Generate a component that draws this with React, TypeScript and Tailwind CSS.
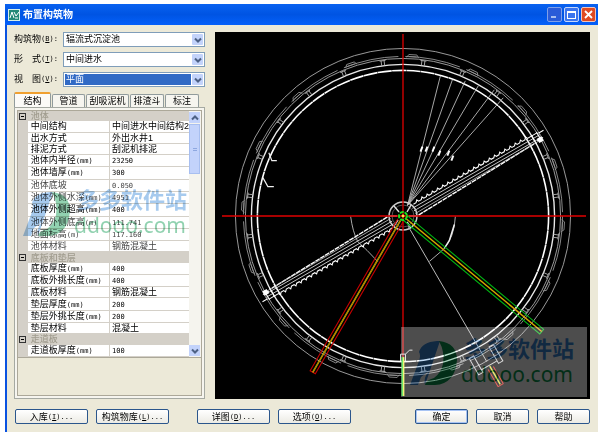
import React from "react";

type Row =
  | { kind: "group"; name: string }
  | { kind: "item"; name: string; unit?: string; value: string; locked?: boolean };

const rows: Row[] = [
  { kind: "group", name: "池体" },
  { kind: "item", name: "中间结构", value: "中间进水中间结构2" },
  { kind: "item", name: "出水方式", value: "外出水井1" },
  { kind: "item", name: "排泥方式", value: "刮泥机排泥" },
  { kind: "item", name: "池体内半径", unit: "(mm)", value: "23250" },
  { kind: "item", name: "池体墙厚", unit: "(mm)", value: "300" },
  { kind: "item", name: "池体底坡", value: "0.050", locked: true },
  { kind: "item", name: "池体外侧水深", unit: "(mm)", value: "4951", locked: true },
  { kind: "item", name: "池体外侧超高", unit: "(mm)", value: "400" },
  { kind: "item", name: "池体外侧底高", unit: "(m)", value: "111.741", locked: true },
  { kind: "item", name: "地面标高", unit: "(m)", value: "117.160", locked: true },
  { kind: "item", name: "池体材料", value: "钢筋混凝土", locked: true },
  { kind: "group", name: "底板和垫层" },
  { kind: "item", name: "底板厚度", unit: "(mm)", value: "400" },
  { kind: "item", name: "底板外挑长度", unit: "(mm)", value: "400" },
  { kind: "item", name: "底板材料", value: "钢筋混凝土" },
  { kind: "item", name: "垫层厚度", unit: "(mm)", value: "200" },
  { kind: "item", name: "垫层外挑长度", unit: "(mm)", value: "200" },
  { kind: "item", name: "垫层材料", value: "混凝土" },
  { kind: "group", name: "走道板" },
  { kind: "item", name: "走道板厚度", unit: "(mm)", value: "100" },
];

const mono = "font-['DejaVu_Sans_Mono',monospace] text-[7px]";

function Chevron({ up = false }: { up?: boolean }) {
  return (
    <svg viewBox="0 0 8 6" className="h-[6px] w-[8px]" fill="none" stroke="#4d6185" strokeWidth="2">
      <path d={up ? "M1 4.5 4 1.5 7 4.5" : "M1 1.5 4 4.5 7 1.5"} />
    </svg>
  );
}

function Field({
  id,
  label,
  hotkey,
  value,
  focused = false,
}: {
  id: string;
  label: string[];
  hotkey: string;
  value: string;
  focused?: boolean;
}) {
  return (
    <div className="flex h-[15px] items-center">
      <label htmlFor={id} className="flex w-[49px] shrink-0 items-center">
        <span className="flex w-[27px] justify-between">
          {label.map((part) => (
            <span key={part}>{part}</span>
          ))}
        </span>
        <span className={mono}>
          (<u>{hotkey}</u>):
        </span>
      </label>
      <div className="relative h-[15px] flex-1 border border-[#7f9db9] bg-white p-px">
        <select
          id={id}
          defaultValue={value}
          className={`block h-[11px] w-[126px] appearance-none pl-px text-[9px] leading-[11px] outline-none ${
            focused ? "bg-[#316ac5] text-white" : "bg-white text-black"
          }`}
        >
          <option>{value}</option>
        </select>
        <span className="pointer-events-none absolute top-px right-px flex h-[11px] w-[11px] items-center justify-center rounded-[1px] bg-[#c3d3fb]">
          <Chevron />
        </span>
      </div>
    </div>
  );
}

function Watermark({ className }: { className: string }) {
  return (
    <div
      className={`pointer-events-none absolute flex h-[70px] w-[186px] items-center bg-white ${className}`}
    >
      <svg viewBox="0 0 60 70" className="h-[70px] w-[60px] shrink-0">
        <path
          d="M9 58 18 34Q20 28 18 25Q21 15 36 14L39 14 24 58Q22 51 28 44L20 50 17 58Z"
          fill="#3888d8"
        />
        <path
          d="M38 14Q56 16 56 33Q54 57 34 58L24 58Q25 53 33 51Q40 46 42 37Q44 25 38 14Z"
          fill="#0b9a50"
        />
      </svg>
      <div className="flex flex-col whitespace-nowrap">
        <span className="pl-[3px] text-[22px] leading-[24px] font-bold text-[#3888d8]">多多软件站</span>
        <span className="font-['Noto_Sans',sans-serif] text-[21px] leading-[24px] text-[#0b9a50]">
          ddooo.com
        </span>
      </div>
    </div>
  );
}

const baffles = Array.from({ length: 24 }, (_, i) => 7.5 + i * 15);
const clips = Array.from({ length: 16 }, (_, i) => 3.5 + i * 22.5);
const fan = [
  [440, 76, 422, 147],
  [452, 80, 427, 147],
  [465, 81, 434, 147],
  [478, 86, 440, 151],
  [494, 90, 449, 151],
  [503, 98, 453, 156],
];
const teeth = Array.from({ length: 22 }, (_, i) => `L${18 + i * 6} -5 l2 -2 l1 2`).join(" ");

function HalfBridge() {
  return (
    <g>
      <path d={`M15 -5 ${teeth} L158 -5`} stroke="#fff" strokeWidth="1.1" />
      <path d="M12 -2H160M12 1H160" stroke="#ddd" strokeWidth=".8" />
      <path d="M14 7 150 3" stroke="#fff" strokeWidth="1.4" strokeDasharray="5 .7" />
      <path d="M12 4 156 3" stroke="#ccc" strokeWidth=".7" />
      <path d="M152 -6V5M158 -6V5M154 2H161M159 -4H165" stroke="#fff" />
      <path d="M155 0h5v5h-5z" fill="#fff" />
    </g>
  );
}

function TankPlan() {
  return (
    <svg
      viewBox="214 32 376 368"
      className="block w-full bg-black"
      fill="none"
      role="img"
      aria-label="平面"
    >
      <g transform="translate(402.5 216.5)">
        <g stroke="#aaa">
          <circle r="168" strokeWidth=".9" />
          <circle r="160" strokeWidth=".8" strokeDasharray="56 7" />
          <circle r="158" strokeWidth=".9" />
        </g>
        <circle r="152" stroke="#e8e8e8" strokeWidth="1.4" />
        <circle r="146" stroke="#fff" strokeWidth="1.6" strokeDasharray="14 .4" />
        {baffles.map((a) => (
          <path
            key={a}
            d="M-1.5 -157V-152M1.5 -157V-152M-3 -157H3"
            stroke="#aaa"
            strokeWidth=".9"
            transform={`rotate(${a})`}
          />
        ))}
        {clips.map((a) => (
          <path
            key={a}
            d="M-6 -159 -4 -162H4L6 -159M-4 -160H4"
            stroke="#999"
            strokeWidth=".8"
            transform={`rotate(${a})`}
          />
        ))}
      </g>

      {fan.map(([x, y, mx, my]) => (
        <g key={x}>
          <path d={`M407 206 ${x} ${y}`} stroke="#bbb" strokeWidth=".9" />
          <path d={`M${mx} ${my}l-2 5`} stroke="#fff" strokeWidth="1.9" />
        </g>
      ))}
      <path d="M268 153 271 161H276M262 178 267 187H273" stroke="#eee" strokeWidth="1.2" />

      <path d="M350 217Q352 232 357 242Q366 250 377 262" stroke="#aaa" />
      <path d="M455 217Q454 238 443 250L429 262" stroke="#aaa" />
      <path d="M454 225 449 241 444 249" stroke="#eee" strokeWidth="1.5" />

      <g transform="translate(402.5 216.5)">
        <g transform="rotate(-30)">
          <HalfBridge />
          <g transform="rotate(180)">
            <HalfBridge />
          </g>
        </g>
        <circle r="14" stroke="#ccc" strokeWidth="1.5" />
        <circle r="11" stroke="#777" strokeWidth=".7" />
        <path
          d="M-4 -4-9 -10M4 -4 8 -11M-5 4-9 10M4 6 8 12M-13 0H-6M6 0H13"
          stroke="#ddd"
          strokeWidth="1.4"
        />
        <path d="M5 10 84 146" stroke="#bbb" />
      </g>

      <g transform="translate(486 361) rotate(-30)" stroke="#ccc">
        <path d="M-14 -10H-9V9H-14ZM9 -10H14V9H9ZM-9 6H9" />
        <path d="M-3 9V29M3 9V29M-3 29H3" stroke="#e0241c" />
        <path d="M0 7V28" stroke="#e8e83c" strokeWidth="1.4" />
      </g>

      <path d="M402.5 34V360M221 216.5H586" stroke="#e00000" strokeWidth="1.3" />

      <g transform="translate(402.5 216.5) rotate(120)">
        <path d="M5 -3H181V3H5" stroke="#c80000" strokeWidth="1.1" />
        <path d="M5 0H181" stroke="#c8c800" strokeWidth="1.6" />
        <path d="M5 0H181" stroke="#a03000" strokeWidth=".5" />
      </g>
      <g transform="translate(402.5 216.5) rotate(39.8)">
        <path d="M3 -3H181V3H3" stroke="#00b414" strokeWidth="1.1" />
        <path d="M3 0H181" stroke="#d8a800" strokeWidth="1.4" />
      </g>
      <circle cx="402.5" cy="216.5" r="4" stroke="#1ee01e" strokeWidth="2" strokeDasharray="4 1" />
      <circle cx="402.5" cy="216.5" r="1.5" fill="#ffe640" />

      <path d="M400 362V355H405V362M405 355 409 351H412" stroke="#ddd" />
      <path d="M401.8 358V397" stroke="#2be02b" strokeWidth="1.6" />
      <path d="M403.2 358V397" stroke="#f0f040" strokeWidth="1.4" />
    </svg>
  );
}

function PushButton({
  children,
  className,
}: {
  children: React.ReactNode;
  className: string;
}) {
  return (
    <button
      type="button"
      className={`flex h-[15px] items-center justify-center rounded-[2px] border bg-linear-to-b from-white to-[#ecebe4] text-[9px] leading-[12px] ${className}`}
    >
      {children}
    </button>
  );
}

function Hot({ letter }: { letter: string }) {
  return (
    <span className={mono}>
      (<u>{letter}</u>)...
    </span>
  );
}

const tabs = [
  { name: "管道", width: "w-[33px]" },
  { name: "刮吸泥机", width: "w-[43px]" },
  { name: "排渣斗", width: "w-[34px]" },
  { name: "标注", width: "w-[34px]" },
];

export default function App() {
  return (
    <div className="bg-white pt-1 pr-0.5 pb-1 pl-[5px] font-['Liberation_Sans','Noto_Sans_CJK_SC',sans-serif] text-[9px] leading-[11px] text-black">
      <div className="border-l-2 border-[#0a52e0] bg-[#ece9d8]">
        <header className="-ml-0.5 flex h-[21px] items-center bg-linear-to-b from-[#0a62f0] via-[#0054e3] to-[#0560fa] pr-0.5 pl-[3px]">
          <svg viewBox="0 0 12 12" className="h-3 w-3">
            <path d="M0 0h12v12H0z" fill="#d8f0e8" />
            <path d="M1 11V1h10v10z" fill="#258a78" />
            <path d="M2 9 4 3 6 9M6 3l2 4 3-4M7 9h3" stroke="#fff" fill="none" />
          </svg>
          <h1 className="ml-[3px] text-[10px] leading-[14px] font-bold text-white">布置构筑物</h1>
          <div className="ml-auto flex gap-[2px]">
            <button
              type="button"
              aria-label="最小化"
              className="flex h-[15px] w-[15px] items-end rounded-[2px] border border-[#7f9fe8] bg-[#2a5bd8] p-[3px]"
            >
              <span className="h-[2px] w-[5px] bg-[#a9bff0]" />
            </button>
            <button
              type="button"
              aria-label="最大化"
              className="flex h-[15px] w-[15px] items-center justify-center rounded-[2px] border border-[#c5d6fb] bg-[#3b74ee]"
            >
              <span className="h-[8px] w-[9px] border border-t-2 border-white" />
            </button>
            <button
              type="button"
              aria-label="关闭"
              className="flex h-[15px] w-[15px] items-center justify-center rounded-[2px] border border-[#f3c4b8] bg-[#df4a22]"
            >
              <svg viewBox="0 0 9 9" className="h-[9px] w-[9px]" stroke="#fff" strokeWidth="1.8">
                <path d="M1 1 8 8M8 1 1 8" />
              </svg>
            </button>
          </div>
        </header>

        <main className="flex gap-[10px] pt-[7px] pr-2 pl-[7px]">
          <section className="flex w-[191px] shrink-0 flex-col">
            <div className="flex flex-col gap-[5px]">
              <Field id="structure" label={["构筑物"]} hotkey="B" value="辐流式沉淀池" />
              <Field id="form" label={["形", "式"]} hotkey="T" value="中间进水" />
              <Field id="view" label={["视", "图"]} hotkey="V" value="平面" focused />
            </div>

            <div role="tablist" className="mt-[5px] flex items-end gap-px">
              <button
                type="button"
                role="tab"
                aria-selected="true"
                className="h-[15px] w-[37px] rounded-t-[2px] border-x border-t-2 border-x-[#919b9c] border-t-[#f0a030] bg-[#fbfaf7] leading-[12px]"
              >
                结构
              </button>
              {tabs.map((t) => (
                <button
                  key={t.name}
                  type="button"
                  role="tab"
                  aria-selected="false"
                  className={`h-[13px] rounded-t-[2px] border border-b-0 border-[#919b9c] bg-[#f6f5ef] leading-[11px] ${t.width}`}
                >
                  {t.name}
                </button>
              ))}
            </div>

            <div className="relative flex flex-1 flex-col border border-[#a5a9a2] bg-[#f6f5ef] p-[2px]">
              <div className="flex border border-[#aca899] bg-white">
                <table className="h-[246px] flex-1 table-fixed border-collapse">
                  <colgroup>
                    <col className="w-[10px]" />
                    <col className="w-[82px]" />
                    <col />
                  </colgroup>
                  <tbody>
                    {rows.map((row, i) =>
                      row.kind === "group" ? (
                        <tr key={i} className="bg-[#d4d0c8]">
                          <td className="p-0">
                            <span className="mx-auto flex h-[7px] w-[7px] items-center justify-center border border-[#333]">
                              <span className="h-px w-[3px] bg-black" />
                            </span>
                          </td>
                          <th
                            colSpan={2}
                            scope="rowgroup"
                            className="p-0 pl-[3px] text-left leading-[10px] font-medium text-[#a09c8e]"
                          >
                            {row.name}
                          </th>
                        </tr>
                      ) : (
                        <tr key={i} className={row.locked ? "text-[#444]" : "text-black"}>
                          <td className="bg-[#d4d0c8] p-0" />
                          <th
                            scope="row"
                            className="border-r border-b border-[#d4d0c8] p-0 pl-[3px] text-left leading-[10px] font-normal whitespace-nowrap"
                          >
                            {row.name}
                            {row.unit && <span className={mono}>{row.unit}</span>}
                          </th>
                          <td className="border-b border-[#d4d0c8] p-0 pl-[2px] leading-[10px] whitespace-nowrap">
                            {/^[\d.]+$/.test(row.value) ? (
                              <span className={mono}>{row.value}</span>
                            ) : (
                              row.value
                            )}
                          </td>
                        </tr>
                      ),
                    )}
                  </tbody>
                </table>
                <div className="flex w-[12px] shrink-0 flex-col justify-between bg-[#f5f4ee] py-px">
                  <div className="flex flex-col gap-px">
                    <button
                      type="button"
                      aria-label="向上滚动"
                      className="flex h-[11px] w-[11px] items-center justify-center bg-[#c3d3fb]"
                    >
                      <Chevron up />
                    </button>
                    <div className="flex h-[50px] w-[11px] flex-col items-center justify-center gap-px border border-[#a8bff0] bg-[#c3d3fb]">
                      <span className="h-px w-[4px] bg-[#8ea8e0]" />
                      <span className="h-px w-[4px] bg-[#8ea8e0]" />
                    </div>
                  </div>
                  <button
                    type="button"
                    aria-label="向下滚动"
                    className="flex h-[11px] w-[11px] items-center justify-center bg-[#c3d3fb]"
                  >
                    <Chevron />
                  </button>
                </div>
              </div>
              <div className="flex-1 border border-t-0 border-[#aca899] bg-[#ece9d8]" />
              <Watermark className="top-[70px] -left-px opacity-45 mix-blend-multiply" />
            </div>
          </section>

          <section className="relative min-w-0 flex-1">
            <TankPlan />
            <Watermark className="right-[3px] bottom-[2px] opacity-30" />
          </section>
        </main>

        <footer className="flex items-center gap-2 pt-[10px] pr-2 pb-2 pl-2">
          <PushButton className="w-[73px] border-[#2b568c]">
            入库
            <Hot letter="I" />
          </PushButton>
          <PushButton className="w-[73px] border-[#2b568c]">
            构筑物库
            <Hot letter="L" />
          </PushButton>
          <PushButton className="ml-5 w-[73px] border-[#2b568c]">
            详图
            <Hot letter="D" />
          </PushButton>
          <PushButton className="w-[73px] border-[#2b568c]">
            选项
            <Hot letter="O" />
          </PushButton>
          <PushButton className="ml-auto w-[53px] border-[#2b568c] ring-1 ring-[#a8c4f4] ring-inset">
            确定
          </PushButton>
          <PushButton className="w-[53px] border-[#2b568c]">取消</PushButton>
          <PushButton className="w-[53px] border-[#2b568c]">帮助</PushButton>
        </footer>
      </div>
    </div>
  );
}
